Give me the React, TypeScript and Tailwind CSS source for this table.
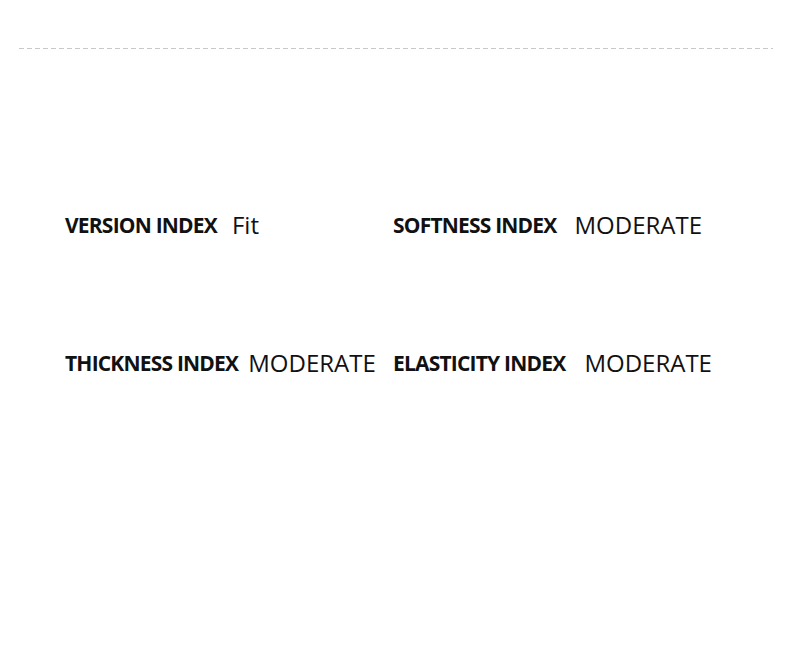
// Product index spec sheet — four "INDEX" labels with values,
// under a light dashed divider.

const SPECS = [
  { label: 'VERSION INDEX', value: 'Fit', gap: 'gap-[15px]' },
  { label: 'SOFTNESS INDEX', value: 'MODERATE', gap: 'gap-[18px]' },
  { label: 'THICKNESS INDEX', value: 'MODERATE', gap: 'gap-[10px]' },
  { label: 'ELASTICITY INDEX', value: 'MODERATE', gap: 'gap-[19px]' },
];

export default function App() {
  return (
    <div className="w-[790px] h-[660px] bg-white overflow-hidden font-['Open_Sans',sans-serif] text-[#111]">
      {/* Dashed divider */}
      <div className="mt-[48px] ml-[19px] mr-[17px] h-px bg-[repeating-linear-gradient(to_right,#c8c8c8_0_5px,transparent_5px_8px)]" />

      <div className="mt-[165px] pl-[65px] grid grid-cols-[328px_1fr] gap-y-[116px]">
        {SPECS.map((s) => (
          <SpecItem key={s.label} label={s.label} value={s.value} gap={s.gap} />
        ))}
      </div>
    </div>
  );
}

function SpecItem({ label, value, gap }: { label: string; value: string; gap: string }) {
  return (
    <div className={`flex items-center h-[22px] ${gap}`}>
      <span className="text-[21px] font-bold tracking-[-0.8px] leading-none">{label}</span>
      <span className="text-[24px] font-normal leading-none">{value}</span>
    </div>
  );
}
